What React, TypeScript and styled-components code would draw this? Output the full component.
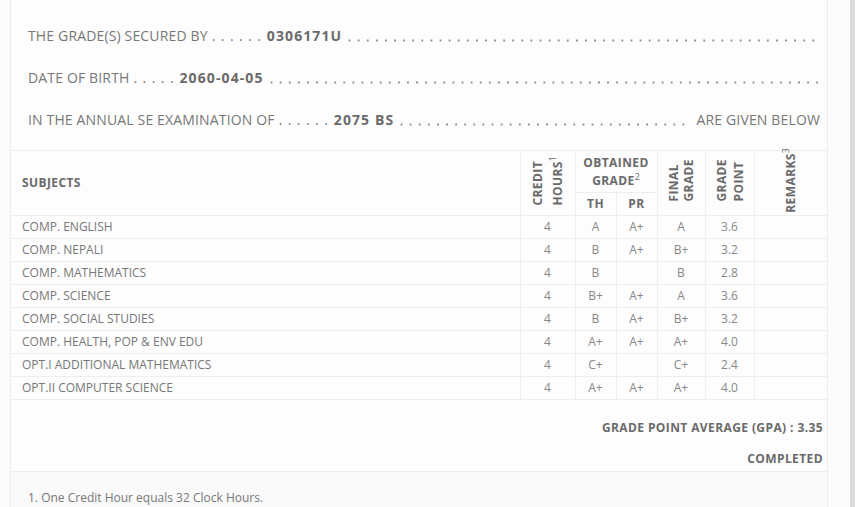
import styled, { createGlobalStyle } from 'styled-components';

const GlobalStyle = createGlobalStyle`
  html, body {
    margin: 0;
    padding: 0;
    background: #fcfcfc;
  }
  body {
    font-family: "Open Sans", "Noto Sans", Arial, sans-serif;
    color: #777;
  }
`;

const Page = styled.div`
  display: flex;
  height: 100vh;
  overflow: hidden;
`;

const Main = styled.div`
  flex: 1;
  padding-left: 10px;
`;

const ScrollTrack = styled.div`
  width: 5px;
  background: #dcdcdc;
`;

const Card = styled.div`
  width: 816px;
  min-height: 100vh;
  background: #fdfdfd;
  border-left: 1px solid #ececec;
  border-right: 1px solid #ececec;
`;

const Info = styled.div`
  padding: 15px 7px 9px 17px;
`;

const InfoLine = styled.div`
  display: flex;
  align-items: baseline;
  height: 42px;
  line-height: 42px;
  font-size: 14px;
  letter-spacing: 0.15px;
  white-space: nowrap;
`;

const Value = styled.b`
  font-weight: 700;
  color: #6a6a6a;
  letter-spacing: 1.1px;
`;

const Dots = styled.span`
  padding: 0 5px 0 4px;
  letter-spacing: 0.9px;
`;

const Leader = styled.span<{ $end?: boolean }>`
  flex: 1;
  align-self: stretch;
  margin: 0 ${p => (p.$end ? '6px' : '0')} 0 3px;
  background-image: radial-gradient(circle, #8a8f98 0 0.9px, transparent 1.3px);
  background-size: 9.1px 3px;
  background-repeat: repeat-x;
  background-position: 0 calc(50% + 4.5px);
`;

const Table = styled.table`
  width: 100%;
  border-collapse: collapse;
  table-layout: fixed;
  border-top: 1px solid #eee;
  font-size: 12px;
`;

const HeadRow = styled.tr<{ $h: number }>`
  height: ${p => p.$h}px;
`;

const Head = styled.th<{ $edge?: boolean; $left?: boolean }>`
  border-bottom: 1px solid #eee;
  border-left: ${p => (p.$edge ? 'none' : '1px solid #eee')};
  padding: 0 ${p => (p.$left ? '11px' : '0')};
  text-align: ${p => (p.$left ? 'left' : 'center')};
  vertical-align: middle;
  font-size: 12px;
  font-weight: 700;
  letter-spacing: 0.4px;
  color: #6a6a6a;
  line-height: 18px;
  white-space: nowrap;
`;

const Rotated = styled.div<{ $pitch: number }>`
  display: inline-block;
  margin: -12px 0;
  writing-mode: vertical-rl;
  transform: rotate(180deg);
  text-align: left;
  line-height: ${p => p.$pitch}px;
  white-space: nowrap;
`;

const Sup = styled.sup`
  font-size: 9px;
  font-weight: 400;
  letter-spacing: 0;
  line-height: 0;
  vertical-align: 5px;
`;

const Row = styled.tr`
  height: 23px;
`;

const Cell = styled.td<{ $edge?: boolean; $left?: boolean }>`
  border-bottom: 1px solid #eee;
  border-left: ${p => (p.$edge ? 'none' : '1px solid #eee')};
  padding: 0 ${p => (p.$left ? '11px' : '0')};
  text-align: ${p => (p.$left ? 'left' : 'center')};
  color: ${p => (p.$left ? '#777' : '#888')};
  line-height: 22px;
  white-space: nowrap;
`;

const Summary = styled.div`
  padding: 0 4px 1px 0;
  text-align: right;
  font-size: 12px;
  font-weight: 700;
  letter-spacing: 0.4px;
  color: #6a6a6a;
`;

const SummaryLine = styled.div<{ $gap: number; $h: number }>`
  margin-top: ${p => p.$gap}px;
  line-height: ${p => p.$h}px;
`;

const Notes = styled.div`
  border-top: 1px solid #eee;
  background: #fafafa;
  padding: 17px 17px 20px;
  font-size: 12px;
  line-height: 18px;
  color: #777;
`;

type Subject = {
  name: string;
  credit: number;
  th: string;
  pr: string;
  final: string;
  point: string;
};

const subjects: Subject[] = [
  { name: 'COMP. ENGLISH', credit: 4, th: 'A', pr: 'A+', final: 'A', point: '3.6' },
  { name: 'COMP. NEPALI', credit: 4, th: 'B', pr: 'A+', final: 'B+', point: '3.2' },
  { name: 'COMP. MATHEMATICS', credit: 4, th: 'B', pr: '', final: 'B', point: '2.8' },
  { name: 'COMP. SCIENCE', credit: 4, th: 'B+', pr: 'A+', final: 'A', point: '3.6' },
  { name: 'COMP. SOCIAL STUDIES', credit: 4, th: 'B', pr: 'A+', final: 'B+', point: '3.2' },
  { name: 'COMP. HEALTH, POP & ENV EDU', credit: 4, th: 'A+', pr: 'A+', final: 'A+', point: '4.0' },
  { name: 'OPT.I ADDITIONAL MATHEMATICS', credit: 4, th: 'C+', pr: '', final: 'C+', point: '2.4' },
  { name: 'OPT.II COMPUTER SCIENCE', credit: 4, th: 'A+', pr: 'A+', final: 'A+', point: '4.0' },
];

function App() {
  return (
    <Page>
      <GlobalStyle />
      <Main>
        <Card>
          <Info>
            <InfoLine>
              THE GRADE(S) SECURED BY
              <Dots>. . . . . .</Dots>
              <Value>0306171U</Value>
              <Leader />
            </InfoLine>
            <InfoLine>
              DATE OF BIRTH
              <Dots>. . . . .</Dots>
              <Value>2060-04-05</Value>
              <Leader />
            </InfoLine>
            <InfoLine>
              IN THE ANNUAL SE EXAMINATION OF
              <Dots>. . . . . .</Dots>
              <Value>2075 BS</Value>
              <Leader $end />
              ARE GIVEN BELOW
            </InfoLine>
          </Info>

          <Table>
            <colgroup>
              <col style={{ width: 509 }} />
              <col style={{ width: 55 }} />
              <col style={{ width: 41 }} />
              <col style={{ width: 41 }} />
              <col style={{ width: 48 }} />
              <col style={{ width: 49 }} />
              <col style={{ width: 73 }} />
            </colgroup>
            <thead>
              <HeadRow $h={42}>
                <Head rowSpan={2} $edge $left>SUBJECTS</Head>
                <Head rowSpan={2}>
                  <Rotated $pitch={20}>
                    CREDIT<br />HOURS<Sup>1</Sup>
                  </Rotated>
                </Head>
                <Head colSpan={2}>
                  OBTAINED<br />GRADE<Sup>2</Sup>
                </Head>
                <Head rowSpan={2}>
                  <Rotated $pitch={15}>
                    FINAL<br />GRADE
                  </Rotated>
                </Head>
                <Head rowSpan={2}>
                  <Rotated $pitch={17}>
                    GRADE<br />POINT
                  </Rotated>
                </Head>
                <Head rowSpan={2}>
                  <Rotated $pitch={15}>
                    REMARKS<Sup>3</Sup>
                  </Rotated>
                </Head>
              </HeadRow>
              <HeadRow $h={23}>
                <Head>TH</Head>
                <Head>PR</Head>
              </HeadRow>
            </thead>
            <tbody>
              {subjects.map(s => (
                <Row key={s.name}>
                  <Cell $edge $left>{s.name}</Cell>
                  <Cell>{s.credit}</Cell>
                  <Cell>{s.th}</Cell>
                  <Cell>{s.pr}</Cell>
                  <Cell>{s.final}</Cell>
                  <Cell>{s.point}</Cell>
                  <Cell />
                </Row>
              ))}
            </tbody>
          </Table>

          <Summary>
            <SummaryLine $gap={16} $h={24}>GRADE POINT AVERAGE (GPA) : 3.35</SummaryLine>
            <SummaryLine $gap={8} $h={22}>COMPLETED</SummaryLine>
          </Summary>

          <Notes>1. One Credit Hour equals 32 Clock Hours.</Notes>
        </Card>
      </Main>
      <ScrollTrack />
    </Page>
  );
}

export default App;
